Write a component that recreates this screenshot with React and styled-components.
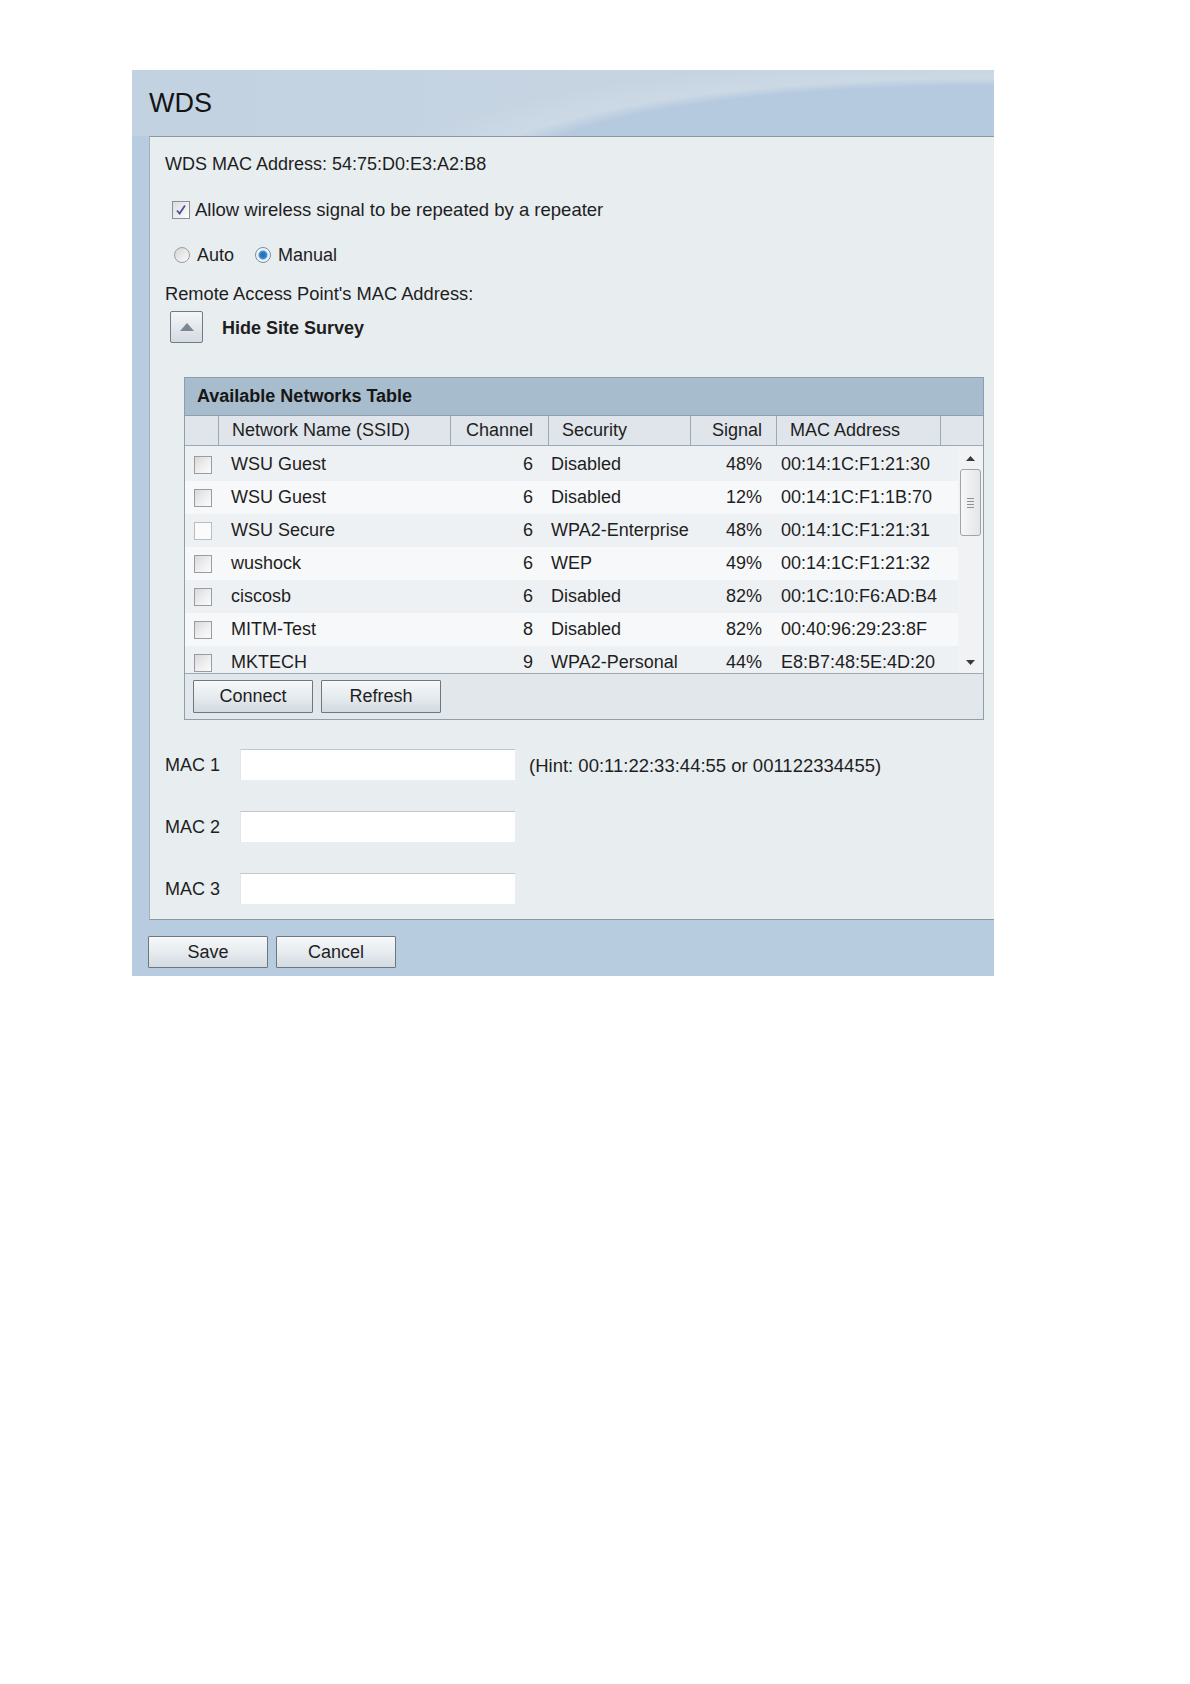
import React from "react";
import styled, { createGlobalStyle } from "styled-components";

const Global = createGlobalStyle`
  html, body { margin: 0; padding: 0; background: #ffffff; }
  body { font-family: "Liberation Sans", Arial, sans-serif; color: #1e1e1e; }
  * { box-sizing: border-box; }
`;

const Page = styled.div`
  padding: 70px 0 0 132px;
  min-height: 1684px;
`;

const Panel = styled.div`
  width: 862px;
  background: #b8cce0;
`;

const Header = styled.div`
  height: 66px;
  padding-left: 17px;
  display: flex;
  align-items: center;
  font-size: 27px;
  color: #141414;
  background:
    radial-gradient(ellipse 760px 150px at 98% 165%, #b6cadf 62%, #ccd9e5 67%, rgba(204,217,229,0) 80%),
    linear-gradient(to right, #c2d2e1 0%, #c6d4e2 55%, #c3d2e1 100%);
`;

const Content = styled.div`
  margin-left: 17px;
  background: #e8edf0;
  border-top: 1px solid #8b98a3;
  border-left: 1px solid #a3b1bc;
  border-bottom: 1px solid #8b98a3;
  padding: 16px 0 15px 15px;
  display: flex;
  flex-direction: column;
  align-items: flex-start;
  font-size: 18px;
`;

const Line = styled.div`
  height: 22px;
  line-height: 22px;
  margin-top: ${(p) => p.$mt || 0}px;
  font-size: ${(p) => p.$fs || 18}px;
  display: flex;
  align-items: center;
  white-space: nowrap;
`;

const CheckBox = styled.span`
  width: 18px;
  height: 18px;
  margin-left: 7px;
  margin-right: 5px;
  border: 1px solid #8c9096;
  background: linear-gradient(135deg, #dcdcdc, #ffffff);
  display: inline-flex;
  align-items: center;
  justify-content: center;
`;

const Radio = styled.span`
  width: 16px;
  height: 16px;
  border-radius: 50%;
  border: 1px solid ${(p) => (p.$on ? "#6f8fae" : "#9a9ea3")};
  background: ${(p) =>
    p.$on
      ? "radial-gradient(circle at 50% 50%, #1e6fb8 0, #2b7fc6 3px, #5a9ad2 4px, #e8eef4 5px, #fafcfd 8px)"
      : "linear-gradient(135deg, #d6d6d6, #fbfbfb)"};
  margin-left: ${(p) => p.$ml || 0}px;
  margin-right: 7px;
`;

const Toggle = styled.div`
  margin-top: 6px;
  margin-left: 5px;
  display: flex;
  align-items: center;
  gap: 19px;
  font-weight: bold;
`;

const ToggleButton = styled.span`
  width: 33px;
  height: 32px;
  border: 1px solid #6f7b85;
  border-radius: 2px;
  background: linear-gradient(#f4f6f8, #d3dbe1);
  display: flex;
  align-items: center;
  justify-content: center;
`;

const ToggleText = styled.span`
  padding-top: 3px;
`;

const Table = styled.div`
  margin-top: 34px;
  margin-left: 19px;
  width: 800px;
  border: 1px solid #8e9eab;
  display: flex;
  flex-direction: column;
`;

const TableTitle = styled.div`
  height: 38px;
  padding-left: 12px;
  display: flex;
  align-items: center;
  background: #a7bccc;
  font-weight: bold;
  color: #161616;
  border-bottom: 1px solid #8e9eab;
`;

const cols = "34px 232px 98px 142px 86px 164px 1fr";

const HeadRow = styled.div`
  display: grid;
  grid-template-columns: ${cols};
  height: 30px;
  background: #dfe5ea;
  border-bottom: 1px solid #9aaab6;
`;

const HeadCell = styled.div`
  display: flex;
  align-items: center;
  justify-content: ${(p) => (p.$right ? "flex-end" : p.$center ? "center" : "flex-start")};
  padding: 0 ${(p) => (p.$right ? 14 : 0)}px 0 ${(p) => (p.$right ? 0 : p.$pl ?? 13)}px;
  border-right: ${(p) => (p.$last ? "none" : "1px solid #9aaab6")};
  color: #1e1e1e;
`;

const Body = styled.div`
  display: flex;
  height: 227px;
  overflow: hidden;
  background: #eef1f4;
`;

const Rows = styled.div`
  flex: 1;
  display: flex;
  flex-direction: column;
  overflow: hidden;
  padding-top: 2px;
`;

const Row = styled.div`
  flex: 0 0 33px;
  display: grid;
  grid-template-columns: 34px 232px 98px 142px 86px 1fr;
  align-items: center;
  background: ${(p) => (p.$odd ? "#eef1f4" : "#f6f8f9")};
`;

const Cell = styled.div`
  padding-left: ${(p) => p.$pl ?? 0}px;
  padding-right: ${(p) => p.$pr ?? 0}px;
  text-align: ${(p) => (p.$right ? "right" : "left")};
  white-space: nowrap;
  color: #1e1e1e;
`;

const RowCheck = styled.span`
  display: block;
  width: 18px;
  height: 18px;
  margin-left: 9px;
  border: 1px solid ${(p) => (p.$plain ? "#b9bcc0" : "#999da2")};
  background: ${(p) =>
    p.$plain ? "#fbfbfb" : "linear-gradient(135deg, #d9d9d9 0%, #efefef 55%, #fbfbfb 100%)"};
`;

const Scrollbar = styled.div`
  width: 25px;
  background: #f0f2f4;
  display: flex;
  flex-direction: column;
  align-items: center;
  padding: 10px 0 8px;
`;

const Thumb = styled.div`
  margin-top: 8px;
  width: 21px;
  height: 67px;
  border: 1px solid #9ea4aa;
  border-radius: 3px;
  background: linear-gradient(to right, #f7f7f7, #e3e5e7);
  display: flex;
  flex-direction: column;
  justify-content: center;
  align-items: center;
  gap: 2px;
`;

const Grip = styled.span`
  width: 7px;
  height: 1px;
  background: #8d9298;
`;

const Spacer = styled.div`
  flex: 1;
`;

const ButtonBar = styled.div`
  height: 46px;
  background: #e2e7eb;
  border-top: 1px solid #9aaab6;
  display: flex;
  align-items: flex-start;
  gap: 8px;
  padding: 6px 0 0 8px;
`;

const Button = styled.button`
  width: 120px;
  height: ${(p) => p.$h || 32}px;
  border: 1px solid #6c7781;
  border-radius: 1px;
  background: linear-gradient(#f6f8f9 0%, #e8edf0 45%, #d3dbe1 100%);
  font-family: "Liberation Sans", Arial, sans-serif;
  font-size: 18px;
  color: #1e1e1e;
  padding: 0;
`;

const FormRow = styled.div`
  margin-top: ${(p) => p.$mt}px;
  height: 31px;
  display: flex;
  align-items: center;
`;

const Label = styled.span`
  width: 75px;
  padding-top: 2px;
`;

const Input = styled.input`
  width: 275px;
  height: 31px;
  border: none;
  border-top: 1px solid #c3c8cc;
  border-left: 1px solid #e2e6e9;
  background: #ffffff;
  font-family: "Liberation Sans", Arial, sans-serif;
  font-size: 18px;
  outline: none;
`;

const Hint = styled.span`
  margin-left: 14px;
  padding-top: 2px;
  font-size: 18.5px;
  white-space: nowrap;
`;

const Footer = styled.div`
  padding: 16px 0 8px 16px;
  display: flex;
  gap: 8px;
`;

const networks = [
  ["WSU Guest", "6", "Disabled", "48%", "00:14:1C:F1:21:30"],
  ["WSU Guest", "6", "Disabled", "12%", "00:14:1C:F1:1B:70"],
  ["WSU Secure", "6", "WPA2-Enterprise", "48%", "00:14:1C:F1:21:31", true],
  ["wushock", "6", "WEP", "49%", "00:14:1C:F1:21:32"],
  ["ciscosb", "6", "Disabled", "82%", "00:1C:10:F6:AD:B4"],
  ["MITM-Test", "8", "Disabled", "82%", "00:40:96:29:23:8F"],
  ["MKTECH", "9", "WPA2-Personal", "44%", "E8:B7:48:5E:4D:20"],
];

export default function App() {
  return (
    <Page>
      <Global />
      <Panel>
        <Header>WDS</Header>
        <Content>
          <Line>WDS MAC Address: 54:75:D0:E3:A2:B8</Line>
          <Line $mt={24} $fs={18.5}>
            <CheckBox>
              <svg width="12" height="12" viewBox="0 0 12 12">
                <path d="M2 6.5 L4.6 9.5 L10 1.5" fill="none" stroke="#4b4fa6" strokeWidth="1.8" />
              </svg>
            </CheckBox>
            Allow wireless signal to be repeated by a repeater
          </Line>
          <Line $mt={23}>
            <Radio $ml={9} />
            Auto
            <Radio $on $ml={21} />
            Manual
          </Line>
          <Line $mt={17} $fs={18.3}>Remote Access Point's MAC Address:</Line>
          <Toggle>
            <ToggleButton>
              <svg width="14" height="8" viewBox="0 0 14 8">
                <path d="M7 0 L14 8 L0 8 Z" fill="#7c8791" />
              </svg>
            </ToggleButton>
            <ToggleText>Hide Site Survey</ToggleText>
          </Toggle>
          <Table>
            <TableTitle>Available Networks Table</TableTitle>
            <HeadRow>
              <HeadCell />
              <HeadCell>Network Name (SSID)</HeadCell>
              <HeadCell $center $pl={0}>Channel</HeadCell>
              <HeadCell>Security</HeadCell>
              <HeadCell $right>Signal</HeadCell>
              <HeadCell>MAC Address</HeadCell>
              <HeadCell $last />
            </HeadRow>
            <Body>
              <Rows>
                {networks.map((n, i) => (
                  <Row key={i} $odd={i % 2 === 0}>
                    <Cell>
                      <RowCheck $plain={n[5]} />
                    </Cell>
                    <Cell $pl={12}>{n[0]}</Cell>
                    <Cell $right $pr={16}>{n[1]}</Cell>
                    <Cell $pl={2}>{n[2]}</Cell>
                    <Cell $right $pr={15}>{n[3]}</Cell>
                    <Cell $pl={4}>{n[4]}</Cell>
                  </Row>
                ))}
              </Rows>
              <Scrollbar>
                <svg width="9" height="5" viewBox="0 0 9 5">
                  <path d="M4.5 0 L9 5 L0 5 Z" fill="#3a3a3a" />
                </svg>
                <Thumb>
                  <Grip />
                  <Grip />
                  <Grip />
                  <Grip />
                </Thumb>
                <Spacer />
                <svg width="9" height="5" viewBox="0 0 9 5">
                  <path d="M0 0 L9 0 L4.5 5 Z" fill="#3a3a3a" />
                </svg>
              </Scrollbar>
            </Body>
            <ButtonBar>
              <Button $h={33}>Connect</Button>
              <Button $h={33}>Refresh</Button>
            </ButtonBar>
          </Table>
          <FormRow $mt={29}>
            <Label>MAC 1</Label>
            <Input />
            <Hint>(Hint: 00:11:22:33:44:55 or 001122334455)</Hint>
          </FormRow>
          <FormRow $mt={31}>
            <Label>MAC 2</Label>
            <Input />
          </FormRow>
          <FormRow $mt={31}>
            <Label>MAC 3</Label>
            <Input />
          </FormRow>
        </Content>
        <Footer>
          <Button>Save</Button>
          <Button>Cancel</Button>
        </Footer>
      </Panel>
    </Page>
  );
}
